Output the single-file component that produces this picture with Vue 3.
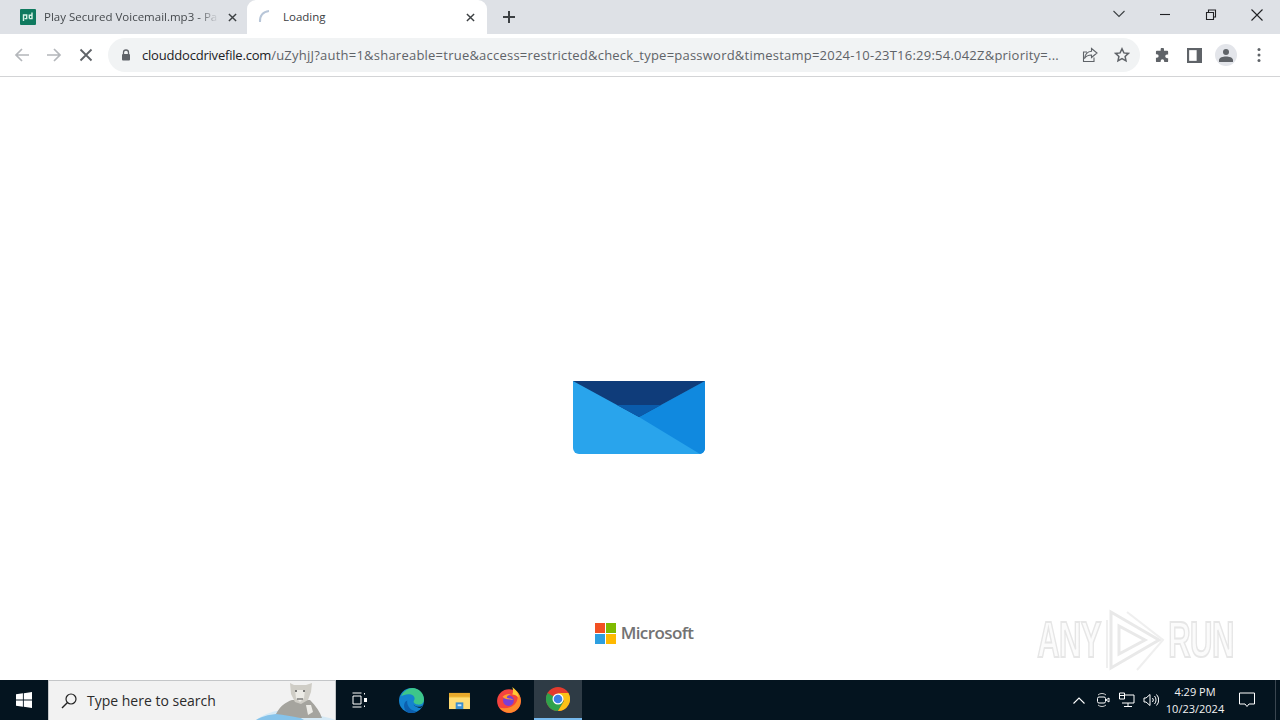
<script setup>
const url = "/uZyhjJ?auth=1&shareable=true&access=restricted&check_type=password&timestamp=2024-10-23T16:29:54.042Z&priority=...";
</script>

<template>
  <div class="screen">
    <div class="tabstrip">
      <div class="tab">
        <svg class="favicon" viewBox="0 0 16 16">
          <rect width="16" height="16" rx="1" fill="#0f7a5f" />
          <path d="M3.500 12V6h3.200v3.600H4.600M9.300 9.600H12V3.500M12 6.200H9.300v3.400" fill="none" stroke="#d8f3e6" stroke-width="1.400" />
        </svg>
        <span class="tab-title fade">Play Secured Voicemail.mp3 - Pa</span>
        <svg class="tab-close" viewBox="0 0 10 10"><path d="M1 1l8 8M9 1l-8 8" stroke="#3c4043" stroke-width="1.600" /></svg>
      </div>
      <div class="tab active">
        <svg class="spinner" viewBox="0 0 16 16"><path d="M2 13C1.500 7 5 2.500 11 2" fill="none" stroke="#b8c6d8" stroke-width="2" /></svg>
        <span class="tab-title">Loading</span>
        <svg class="tab-close" viewBox="0 0 10 10"><path d="M1 1l8 8M9 1l-8 8" stroke="#3c4043" stroke-width="1.600" /></svg>
      </div>
      <svg class="new-tab" viewBox="0 0 12 12"><path d="M6 0v12M0 6h12" stroke="#3c4043" stroke-width="2" /></svg>
      <div class="spacer"></div>
      <div class="win-controls">
        <svg class="win-btn" viewBox="0 0 46 30"><path d="M17.500 11l5.500 5.500 5.500-5.500" fill="none" stroke="#3c4043" stroke-width="1.100" /></svg>
        <svg class="win-btn" viewBox="0 0 46 30"><path d="M18 14.500h10" stroke="#202124" stroke-width="1.100" /></svg>
        <svg class="win-btn" viewBox="0 0 46 30"><path d="M18.500 12.500h7v7h-7zM20.500 12.500v-2.500h7v7h-2" fill="none" stroke="#202124" stroke-width="1.100" /></svg>
        <svg class="win-btn" viewBox="0 0 46 30"><path d="M17.500 9.500l11 11M28.500 9.500l-11 11" stroke="#202124" stroke-width="1.100" /></svg>
      </div>
    </div>

    <div class="toolbar">
      <svg class="tool-icon" viewBox="0 0 16 16"><path d="M15 8H2M8 2L2 8l6 6" fill="none" stroke="#b4b7bb" stroke-width="1.700" /></svg>
      <svg class="tool-icon" viewBox="0 0 16 16"><path d="M1 8h13M8 2l6 6-6 6" fill="none" stroke="#b4b7bb" stroke-width="1.700" /></svg>
      <svg class="tool-icon" viewBox="0 0 16 16"><path d="M2.500 2.500l11 11M13.500 2.500l-11 11" stroke="#5f6368" stroke-width="1.800" /></svg>
      <div class="omnibox">
        <svg class="lock" viewBox="0 0 10 12">
          <path d="M2.500 5V3.500a2.500 2.500 0 0 1 5 0V5" fill="none" stroke="#5f6368" stroke-width="1.300" />
          <rect x="1" y="5" width="8" height="6.500" rx="1" fill="#5f6368" />
        </svg>
        <span class="url"><span class="host">clouddocdrivefile.com</span>{{ url }}</span>
        <svg class="omni-icon" viewBox="0 0 16 16"><path d="M9.500 1.500L15 6l-5.500 4.500V8C6 8 4 9 2.500 11.500 3 7.500 5.500 4.500 9.500 4.200zM12 10.500v4H1.500V5H5" fill="none" stroke="#5f6368" stroke-width="1.100" /></svg>
        <svg class="omni-icon" viewBox="0 0 16 16"><path d="M8 1.800l1.900 4.100 4.500.5-3.300 3 .9 4.400L8 11.600l-4 2.200.9-4.400-3.300-3 4.500-.5z" fill="none" stroke="#5f6368" stroke-width="1.500" /></svg>
      </div>
      <svg class="ext" viewBox="0 0 16 16"><path d="M6 1.500a1.800 1.800 0 0 1 3.600 0V3H13a1 1 0 0 1 1 1v3h-1.200a1.900 1.900 0 0 0 0 3.800H14V14a1 1 0 0 1-1 1H9.800v-1a1.900 1.900 0 0 0-3.800 0v1H2a1 1 0 0 1-1-1V10.500h1a1.900 1.900 0 0 0 0-3.800H1V4a1 1 0 0 1 1-1h4z" fill="#5f6368" /></svg>
      <svg class="ext" viewBox="0 0 14 14"><rect x="0" y="0" width="14" height="14" fill="#5f6368" /><rect x="2" y="2" width="7" height="10" fill="#fff" /></svg>
      <div class="avatar">
        <svg viewBox="0 0 14 14" width="14" height="14"><circle cx="7" cy="4" r="3" fill="#5f6368" /><path d="M0 14v-2c0-2.500 4-3.500 7-3.500s7 1 7 3.500v2z" fill="#5f6368" /></svg>
      </div>
      <svg class="dots" viewBox="0 0 4 16"><circle cx="2" cy="2.500" r="1.500" fill="#5f6368" /><circle cx="2" cy="8" r="1.500" fill="#5f6368" /><circle cx="2" cy="13.500" r="1.500" fill="#5f6368" /></svg>
    </div>

    <div class="page">
      <svg class="envelope" viewBox="0 0 132 73">
        <path d="M0 0h132v67a6 6 0 0 1-6 6H6a6 6 0 0 1-6-6z" fill="#29a4ec" />
        <path d="M132 0v67a6 6 0 0 1-5 6L66 36z" fill="#1089df" />
        <path d="M0 0h132L66 36z" fill="#0f3c7a" />
        <path d="M44 24h44L66 36z" fill="#0a5bab" />
      </svg>
      <div class="ms-logo">
        <div class="ms-squares">
          <i style="background:#f25022"></i><i style="background:#7fba00"></i>
          <i style="background:#2d9fe0"></i><i style="background:#ffb900"></i>
        </div>
        <span class="ms-name">Microsoft</span>
      </div>
      <div class="watermark">
        <span class="wm-text">ANY</span>
        <svg class="wm-play" viewBox="0 0 60 64">
          <path d="M6 4v56l48-28z M14 18v28l26-14z" fill="none" stroke="#e9e9e9" stroke-width="3" />
          <path d="M2 12v48M22 4l36 28-26 30" fill="none" stroke="#efefef" stroke-width="2" />
        </svg>
        <span class="wm-text">RUN</span>
      </div>
    </div>

    <div class="taskbar">
      <div class="start">
        <svg viewBox="0 0 16 16" width="16" height="16"><path d="M0 2.300l6.900-1v6.300H0zM7.800 1.200L16 0v7.600H7.800zM0 8.500h6.900v6.300l-6.900-1zM7.800 8.500H16V16l-8.200-1.200z" fill="#fff" /></svg>
      </div>
      <div class="search">
        <svg class="search-icon" viewBox="0 0 16 16"><circle cx="10" cy="6" r="5" fill="none" stroke="#222" stroke-width="1.200" /><path d="M6.500 9.500L1 15" stroke="#222" stroke-width="1.400" /></svg>
        <span class="search-text">Type here to search</span>
        <svg class="leopard" viewBox="0 0 86 40">
          <path d="M6 40C16 32 30 29 40 31c15 2 35 5 46 9z" fill="#d5e9f5" />
          <path d="M6 40c8-5 20-7 30-6 8 1 14 3 18 6z" fill="#86c3ea" />
          <path d="M26 34c4-8 10-12 16-14h18c6 6 10 12 12 18H50c-8-2-16-3-24-4z" fill="#a5a49e" />
          <path d="M40 3l4 2h12l6-2-1 9-3 8-7 4-6-2-4-8z" fill="#cfcdc6" />
          <path d="M45 10h10l-1 8-4 4-4-4z" fill="#ecebe6" />
          <circle cx="46" cy="11" r="1" fill="#555" /><circle cx="54" cy="11" r="1" fill="#555" />
          <path d="M47 19h6" stroke="#444" stroke-width="1" />
          <path d="M56 25l5 0 2 7-5 3z" fill="#ecebe6" />
        </svg>
      </div>
      <div class="task-btn">
        <svg viewBox="0 0 16 16" width="16" height="16"><path d="M.5 1h9M.5 15h9M1 4h8v8H1z M12.500 1v1.500M12.500 13.500V15" fill="none" stroke="#fff" stroke-width="1" /><rect x="12" y="6" width="3" height="4" fill="#fff" /></svg>
      </div>
      <div class="task-btn edge">
        <svg viewBox="0 0 24 24" width="25" height="25">
          <circle cx="12" cy="12" r="12" fill="#1483cf" />
          <path d="M2 8C4 3 9 0 13 0c6 0 11 5 11 11 0 3-2 5-5 5-2 0-5-1-5-3 0-1 1-1.500 1-3 0-2-2-4-6-4-3 0-5 1-7 2z" fill="#3dc68a" />
          <path d="M8 12c-1 5 3 10 9 10.500-3 2-7 2-10 0-3-3-3-9 1-10.500z" fill="#0c5fae" />
          <path d="M24 15c-1 2-3 3-5 3-2 0-5-1-6-3 2 3 6 4 8 4z" fill="#04141f" />
        </svg>
      </div>
      <div class="task-btn">
        <svg viewBox="0 0 24 20" width="23" height="19">
          <path d="M1 2h8l2 2h12v15H1z" fill="#f6c544" />
          <rect x="1" y="2" width="22" height="4" fill="#e8a92b" />
          <path d="M1 7h22v12H1z" fill="#ffdc74" />
          <rect x="8" y="12" width="8" height="7" fill="#3a8fd0" />
          <rect x="10" y="14" width="4" height="2" fill="#cfe6f7" />
        </svg>
      </div>
      <div class="task-btn firefox">
        <svg viewBox="0 0 24 24" width="26" height="26">
          <circle cx="12" cy="13" r="11" fill="#f4433f" />
          <path d="M23 13a11 11 0 0 1-20 6C9 21 19 19 20 10c0-4-2-6-4-8 4 1 7 6 7 11z" fill="#ff8a2b" />
          <path d="M15 0c3 2 6 6 6 10-2-2-4-3-6-3 1-2 1-5 0-7z" fill="#ffc933" />
          <circle cx="11.500" cy="12.500" r="5" fill="#7a3fd6" />
          <path d="M6 9c3-3 6-3 9-2-3 0-5 1-5 3 2 1 4 0 6 2-4-1-7 0-10-3z" fill="#ff9d2e" />
        </svg>
      </div>
      <div class="task-btn chrome">
        <svg viewBox="0 0 24 24" width="24" height="24">
          <circle cx="12" cy="12" r="12" fill="#e33b2e" />
          <path d="M12 12L1.600 6A12 12 0 0 0 12 24l6-10z" fill="#2fa24b" />
          <path d="M12 6h10.400A12 12 0 0 1 12 24l6-10z" fill="#fbc116" />
          <circle cx="12" cy="12" r="5.500" fill="#fff" />
          <circle cx="12" cy="12" r="4.300" fill="#3d7fe6" />
        </svg>
      </div>
      <div class="spacer"></div>
      <div class="tray">
        <svg class="tray-chevron" viewBox="0 0 12 7"><path d="M.5 6.500L6 1l5.500 5.500" fill="none" stroke="#fff" stroke-width="1.100" /></svg>
        <svg class="tray-icon" viewBox="0 0 16 16"><path d="M3 3a6 6 0 0 1 8 0M3 13a6 6 0 0 0 8 0" fill="none" stroke="#ccc" stroke-width="1" /><rect x="2.500" y="5" width="8" height="6" rx="1.500" fill="none" stroke="#fff" /><path d="M11 8l3-2v4z" fill="none" stroke="#fff" /></svg>
        <svg class="tray-icon" viewBox="0 0 16 16"><path d="M5 3h10v8H3M9 11v3M5 14.500h8M.5 1h5v6h-5zM.5 3.500h5" fill="none" stroke="#fff" /></svg>
        <svg class="tray-icon" viewBox="0 0 16 16"><path d="M1 6h2l4-3.500v11L3 10H1zM9.500 6a3 3 0 0 1 0 4M11.500 4a6 6 0 0 1 0 8M13.500 2.500a8 8 0 0 1 0 11" fill="none" stroke="#fff" /></svg>
      </div>
      <div class="clock"><span>4:29 PM</span><span>10/23/2024</span></div>
      <div class="notify">
        <svg viewBox="0 0 16 16" width="16" height="16"><path d="M.5 1h15v11H10l-2 2.500L6 12H.5z" fill="none" stroke="#fff" /></svg>
      </div>
      <div class="show-desktop"></div>
    </div>
  </div>
</template>

<style scoped>
.screen {
  width: 1280px;
  height: 720px;
  display: flex;
  flex-direction: column;
  overflow: hidden;
  background: #fff;
  font-family: "Open Sans", "Noto Sans", sans-serif;
}
.tabstrip {
  height: 34px;
  display: flex;
  background: #dee1e6;
  padding-left: 8px;
}
.tab {
  width: 239px;
  display: flex;
  align-items: center;
  padding: 0 9px 0 12px;
  box-sizing: border-box;
  font-size: 11.500px;
  color: #45494d;
}
.tab.active {
  width: 240px;
  background: #fff;
  border-radius: 9px 9px 0 0;
  color: #3c4043;
  padding: 0 11px 0 11px;
}
.favicon {
  width: 16px;
  height: 16px;
  margin-right: 8px;
}
.spinner {
  width: 16px;
  height: 16px;
  margin-right: 9px;
}
.tab-title {
  flex: 1;
  white-space: nowrap;
  overflow: hidden;
  padding-bottom: 2px;
}
.fade {
  -webkit-mask-image: linear-gradient(to right, #000 88%, transparent 100%);
  mask-image: linear-gradient(to right, #000 88%, transparent 100%);
}
.tab-close {
  width: 9px;
  height: 9px;
  margin-left: 9px;
  margin-right: 1px;
}
.new-tab {
  width: 12px;
  height: 12px;
  margin: 11px 0 0 16px;
}
.spacer {
  flex: 1;
}
.win-controls {
  display: flex;
}
.win-btn {
  width: 46px;
  height: 30px;
}
.toolbar {
  height: 42px;
  display: flex;
  align-items: center;
  padding: 0 0 0 14px;
  border-bottom: 1px solid #d3d4d6;
  background: #fff;
}
.tool-icon {
  width: 16px;
  height: 16px;
  margin-right: 16px;
  flex: none;
}
.omnibox {
  width: 1032px;
  height: 34px;
  margin-left: -2px;
  margin-right: 15px;
  box-sizing: border-box;
  display: flex;
  align-items: center;
  padding: 0 10px 0 13px;
  background: #f1f3f4;
  border-radius: 17px;
  flex: none;
}
.lock {
  width: 10px;
  height: 12px;
  margin-right: 11px;
  flex: none;
}
.url {
  width: 925px;
  flex: none;
  font-size: 13px;
  color: #5f6368;
  white-space: nowrap;
  overflow: hidden;
  letter-spacing: 0.23px;
}
.host {
  color: #202124;
  letter-spacing: -0.2px;
}
.omni-icon {
  width: 16px;
  height: 16px;
  margin-left: 15px;
  flex: none;
}
.omni-icon + .omni-icon {
  margin-left: 16px;
}
.ext {
  width: 15px;
  height: 15px;
  margin-right: 17px;
  flex: none;
}
.avatar {
  width: 22px;
  height: 22px;
  margin: 0 20px 0 -4px;
  border-radius: 50%;
  background: #e3e5ea;
  display: flex;
  align-items: center;
  justify-content: center;
  flex: none;
}
.dots {
  width: 4px;
  height: 16px;
  flex: none;
}
.page {
  position: relative;
  flex: 1;
  display: flex;
  flex-direction: column;
  align-items: center;
}
.envelope {
  width: 132px;
  height: 73px;
  margin-top: 304px;
  margin-left: -2px;
  filter: blur(0.5px);
}
.ms-logo {
  display: flex;
  align-items: center;
  margin-top: 168px;
  margin-left: 8px;
  gap: 5px;
  height: 22px;
}
.ms-squares {
  display: grid;
  grid-template-columns: 10px 10px;
  grid-auto-rows: 10px;
  gap: 1px;
}
.ms-squares i {
  display: block;
}
.ms-name {
  font-size: 17px;
  font-weight: 600;
  color: #737373;
  letter-spacing: -0.6px;
  padding-bottom: 2px;
  font-family: "Open Sans", sans-serif;
}
.watermark {
  position: absolute;
  left: 1038px;
  top: 530px;
  width: 194px;
  height: 66px;
  display: flex;
  align-items: center;
  justify-content: space-between;
}
.wm-text {
  font-family: "Liberation Sans", sans-serif;
  font-size: 50px;
  font-weight: 700;
  color: #fbfbfb;
  -webkit-text-stroke: 2px #e6e6e6;
  transform: scaleX(0.62);
  letter-spacing: -1px;
  width: 62px;
  display: flex;
  justify-content: center;
}
.wm-play {
  width: 60px;
  height: 64px;
  flex: none;
}
.taskbar {
  height: 40px;
  display: flex;
  align-items: stretch;
  background: #04141f;
  color: #fff;
}
.start {
  width: 48px;
  display: flex;
  align-items: center;
  justify-content: center;
}
.search {
  width: 288px;
  box-sizing: border-box;
  display: flex;
  align-items: center;
  background: #f2f2f2;
  border: 1px solid #c4c6c8;
  border-bottom: none;
  padding-left: 12px;
  position: relative;
  overflow: hidden;
}
.search-icon {
  width: 16px;
  height: 16px;
}
.search-text {
  margin-left: 10px;
  font-size: 14px;
  color: #2b2b2b;
}
.leopard {
  position: absolute;
  right: -1px;
  bottom: 0;
  width: 86px;
  height: 40px;
}
.task-btn {
  width: 48px;
  display: flex;
  align-items: center;
  justify-content: center;
}
.edge {
  margin-left: 3px;
}
.firefox {
  margin-left: 2px;
}
.chrome {
  margin-left: 1px;
  background: #2e3b45;
  border-bottom: 2px solid #76b9ed;
  box-sizing: border-box;
}
.tray {
  display: flex;
  align-items: center;
  gap: 8px;
}
.tray-chevron {
  width: 12px;
  height: 7px;
  margin-right: 2px;
}
.tray-icon {
  width: 16px;
  height: 16px;
}
.clock {
  width: 58px;
  margin-left: 7px;
  display: flex;
  flex-direction: column;
  align-items: center;
  justify-content: center;
  font-size: 11px;
  line-height: 17px;
  white-space: nowrap;
  color: #f2f2f2;
}
.notify {
  width: 46px;
  margin-right: 5px;
  display: flex;
  align-items: center;
  justify-content: center;
}
.show-desktop {
  width: 4px;
  border-left: 1px solid #3a4650;
}
</style>

<style>
html, body {
  margin: 0;
  background: #fff;
}
</style>
